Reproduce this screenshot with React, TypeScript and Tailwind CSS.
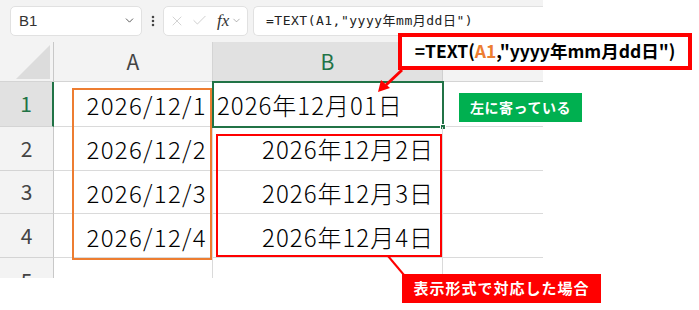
import { ChevronDown, Check, X, EllipsisVertical } from 'lucide-react';

const jp = "font-['Noto_Sans_CJK_JP',sans-serif]";

const rows = [
  { n: 1, a: '2026/12/1', b: '2026年12月01日' },
  { n: 2, a: '2026/12/2', b: '2026年12月2日' },
  { n: 3, a: '2026/12/3', b: '2026年12月3日' },
  { n: 4, a: '2026/12/4', b: '2026年12月4日' },
];

const Toolbar = () => (
  <div className="h-[42px] bg-[#f3f3f3] flex items-center pl-[10px]">
    <div className="w-[132px] h-[30px] bg-white rounded-[5px] border border-[#e1e1e1] flex items-center justify-between pl-[8px] pr-[5px]">
      <span className="text-[15px] text-[#333] font-['Liberation_Sans',sans-serif]">B1</span>
      <ChevronDown size={13} strokeWidth={1.6} className="text-[#444]" />
    </div>
    <div className="w-[21px] flex justify-center">
      <EllipsisVertical size={14} strokeWidth={2.4} className="text-[#444]" />
    </div>
    <div className="w-[85px] h-[30px] bg-white rounded-[5px] border border-[#e1e1e1] flex items-center pl-[5px] gap-[6px]">
      <X size={16} strokeWidth={1} className="text-[#bdbdbd]" />
      <Check size={17} strokeWidth={1} className="text-[#bdbdbd]" />
      <span className="text-[17px] italic font-['Liberation_Serif',serif] text-[#333] leading-none ml-[3px]">fx</span>
      <ChevronDown size={11} strokeWidth={1.4} className="text-[#888] -ml-[4px]" />
    </div>
    <div className="ml-[5px] flex-1 h-[30px] bg-white rounded-l-[5px] border border-r-0 border-[#e1e1e1] flex items-center pl-[12px]">
      <span className="text-[13px] text-[#222] font-['DejaVu_Sans_Mono','Noto_Sans_CJK_JP',monospace] tracking-[0.5px]">
        =TEXT(A1,"yyyy年mm月dd日")
      </span>
    </div>
  </div>
);

const HeaderRow = () => (
  <div className="flex h-[41px]">
    <div className="w-[54px] bg-[#f3f3f3] border-r border-[#c8c8c8] border-b border-b-[#d4d4d4] flex items-end justify-end pr-[3px] pb-[2px]">
      <svg width="34" height="34" viewBox="0 0 34 34">
        <polygon points="0,34 34,0 34,34" fill="#dcdcdc" />
      </svg>
    </div>
    <div className={`w-[159px] bg-[#f3f3f3] border-r border-[#d4d4d4] border-b flex items-center justify-center text-[21px] text-[#444] ${jp}`}>
      A
    </div>
    <div className={`w-[230px] bg-[#e1e1e1] border-r border-[#d0d0d0] border-b border-b-[#a0a0a0] flex items-center justify-center text-[21px] text-[#217346] ${jp}`}>
      B
    </div>
    <div className="w-[100px] bg-[#f3f3f3] border-b border-[#d4d4d4]" />
  </div>
);

const DataRow = ({ n, a, b }: { n: number; a: string; b: string }) => {
  const sel = n === 1;
  return (
    <div className={`flex ${sel ? 'h-[45px]' : 'h-[44px]'} ${jp}`}>
      <div
        className={`w-[54px] flex items-center justify-center text-[21px] border-b border-[#d4d4d4] ${
          sel ? 'bg-[#e1e1e1] text-[#217346] border-r-2 border-r-[#217346]' : 'bg-[#f3f3f3] text-[#444] border-r border-r-[#c8c8c8]'
        }`}
      >
        {n}
      </div>
      <div className="w-[159px] border-r border-b border-[#dadada] flex items-center justify-end pr-[5px] pt-[2px] text-[24px] font-light tracking-[1.3px] text-black">
        {a}
      </div>
      <div
        className={`relative w-[230px] border-r border-b border-[#dadada] flex items-center pt-[2px] text-[24px] font-light tracking-[1px] text-black ${
          sel ? 'justify-start pl-[4px] outline-2 outline-[#217346] -outline-offset-1 outline' : 'justify-end pr-[8px]'
        }`}
      >
        {b}
        {sel && <div className="absolute -right-[4px] -bottom-[4px] w-[6px] h-[6px] bg-[#217346] border border-white" />}
      </div>
      <div className="w-[100px] border-b border-[#dadada]" />
    </div>
  );
};

const App = () => {
  return (
    <div className="relative w-[699px] h-[310px] bg-white overflow-hidden">
      <div className="w-[543px] h-[278px] flex flex-col overflow-hidden">
        <Toolbar />
        <HeaderRow />
        {rows.map(r => (
          <DataRow key={r.n} {...r} />
        ))}
        <div className={`flex h-[20px] ${jp}`}>
          <div className="w-[54px] bg-[#f3f3f3] border-r border-[#c8c8c8] flex justify-center text-[21px] text-[#444] leading-[44px]">
            5
          </div>
          <div className="w-[159px] border-r border-[#dadada]" />
          <div className="w-[230px] border-r border-[#dadada]" />
        </div>
      </div>

      {/* annotation boxes */}
      <div className="absolute left-[72px] top-[88px] w-[140px] h-[172px] border-2 border-[#ed7d31]" />
      <div className="absolute left-[216px] top-[134px] w-[226px] h-[123px] border-2 border-[#ff0000]" />

      <svg className="absolute left-0 top-0" width="699" height="310">
        <line x1="402" y1="70" x2="386" y2="85" stroke="#ff0000" strokeWidth="3" />
        <polygon points="378,92 381,80 390,88" fill="#ff0000" />
        <line x1="388" y1="256" x2="404" y2="275" stroke="#ff0000" strokeWidth="2" />
      </svg>

      <div className="absolute left-[398px] top-[33px] w-[294px] h-[37px] border-4 border-[#ff0000] bg-white flex items-center justify-center">
        <span className={`text-[17.5px] font-bold text-black ${jp}`}>
          =TEXT(<span className="text-[#ed7d31]">A1</span>,"yyyy年mm月dd日")
        </span>
      </div>

      <div className={`absolute left-[459px] top-[93px] w-[123px] h-[29px] bg-[#00b050] flex items-center justify-center text-white font-bold text-[14px] tracking-[0.5px] ${jp}`}>
        左に寄っている
      </div>

      <div className={`absolute left-[402px] top-[274px] w-[199px] h-[29px] bg-[#ff0000] flex items-center justify-center text-white font-bold text-[15px] tracking-[1px] ${jp}`}>
        表示形式で対応した場合
      </div>
    </div>
  );
};

export default App;
